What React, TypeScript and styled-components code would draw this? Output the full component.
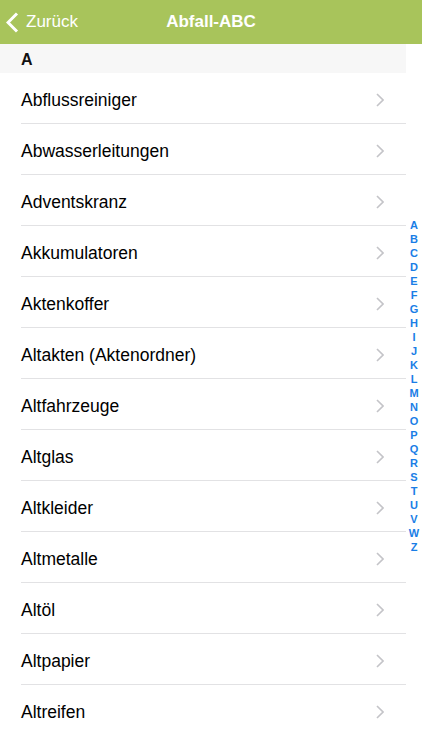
import React from 'react';
import styled, {createGlobalStyle} from 'styled-components';

const GlobalStyle = createGlobalStyle`
  body {
    margin: 0;
    background: #ffffff;
    font-family: "Liberation Sans", Arial, sans-serif;
  }
`;

const Screen = styled.div`
  position: relative;
  width: 422px;
  height: 750px;
  overflow: hidden;
  background: #ffffff;
`;

const NavBar = styled.div`
  height: 44px;
  background: #a8c45b;
  display: grid;
  grid-template-columns: 1fr auto 1fr;
  align-items: center;
  color: #ffffff;
`;

const BackButton = styled.div`
  display: flex;
  align-items: center;
  gap: 7px;
  padding-left: 6px;
  font-size: 17px;
`;

const Title = styled.div`
  font-size: 17px;
  font-weight: bold;
`;

const List = styled.div`
  padding-right: 16px;
`;

const SectionHeader = styled.div`
  height: 29px;
  background: #f7f7f7;
  display: flex;
  align-items: center;
  padding-left: 21px;
  padding-top: 2px;
  box-sizing: border-box;
  font-size: 16px;
  font-weight: bold;
  color: #111;
`;

const Row = styled.div<{last?: boolean}>`
  height: 51px;
  margin-left: 21px;
  display: flex;
  align-items: center;
  justify-content: space-between;
  padding-top: 4px;
  padding-right: 22px;
  border-bottom: 1px solid ${(p) => (p.last ? 'transparent' : '#e2e2e4')};
  box-sizing: border-box;
  font-size: 17.5px;
  color: #000;
`;

const IndexBar = styled.div`
  position: absolute;
  right: 0;
  top: 218px;
  width: 16px;
  display: flex;
  flex-direction: column;
  align-items: center;
`;

const IndexLetter = styled.div`
  height: 14px;
  line-height: 14px;
  font-size: 11px;
  font-weight: bold;
  color: #1a7ee6;
`;

const items = [
  'Abflussreiniger',
  'Abwasserleitungen',
  'Adventskranz',
  'Akkumulatoren',
  'Aktenkoffer',
  'Altakten (Aktenordner)',
  'Altfahrzeuge',
  'Altglas',
  'Altkleider',
  'Altmetalle',
  'Altöl',
  'Altpapier',
  'Altreifen',
];

const letters = 'ABCDEFGHIJKLMNOPQRSTUVWZ'.split('');

const Chevron = () => (
  <svg width="8" height="14" viewBox="0 0 8 14">
    <path d="M1 1l6 6-6 6" fill="none" stroke="#c4c4c8" strokeWidth="1.6" />
  </svg>
);

const BackArrow = () => (
  <svg width="13" height="21" viewBox="0 0 13 21">
    <path d="M11 1.5L2 10.5l9 9" fill="none" stroke="#fff" strokeWidth="3" />
  </svg>
);

const App: React.FC = () => {
  return (
    <Screen>
      <GlobalStyle />
      <NavBar>
        <BackButton>
          <BackArrow />
          Zurück
        </BackButton>
        <Title>Abfall-ABC</Title>
        <div />
      </NavBar>
      <List>
        <SectionHeader>A</SectionHeader>
        {items.map((item, i) => (
          <Row key={item} last={i === items.length - 1}>
            {item}
            <Chevron />
          </Row>
        ))}
      </List>
      <IndexBar>
        {letters.map((l) => (
          <IndexLetter key={l}>{l}</IndexLetter>
        ))}
      </IndexBar>
    </Screen>
  );
};

export default App;
